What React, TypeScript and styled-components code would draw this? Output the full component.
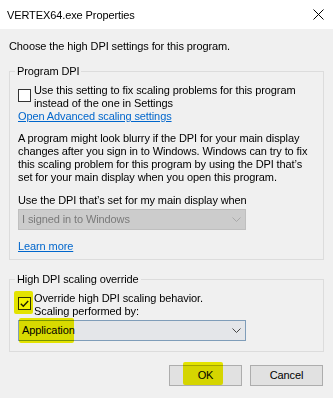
import React from "react";
import styled, { createGlobalStyle } from "styled-components";

const Global = createGlobalStyle`
  html, body { margin: 0; padding: 0; background: #f0f0f0; }
  body {
    font-family: "Liberation Sans", Arial, sans-serif;
    font-size: 11px;
    letter-spacing: -0.1px;
    color: #000;
  }
  * { box-sizing: border-box; }
`;

const Window = styled.div`
  width: 333px;
  height: 398px;
  background: #f0f0f0;
  display: flex;
  flex-direction: column;
  overflow: hidden;
`;

const TitleBar = styled.div`
  height: 29px;
  background: #fff;
  display: flex;
  align-items: center;
  justify-content: space-between;
  padding: 0 9px 0 7px;
  line-height: 14px;
`;

const Body = styled.div`
  display: flex;
  flex-direction: column;
  padding: 0 9px;
`;

const Text = styled.div<{ $mt?: number }>`
  margin-top: ${(p) => p.$mt ?? 0}px;
  line-height: 13px;
  white-space: nowrap;
`;

const Group = styled.fieldset<{ $mt: number; $pb: number }>`
  margin: ${(p) => p.$mt}px 0 0 0;
  border: 1px solid #dcdcdc;
  padding: 6px 8px ${(p) => p.$pb}px 8px;
  min-width: 0;
  display: flex;
  flex-direction: column;
  align-items: flex-start;
`;

const Legend = styled.legend`
  padding: 0 2px;
  margin-left: -3px;
  line-height: 14px;
`;

const CheckRow = styled.div`
  display: flex;
  gap: 3px;
  align-items: flex-start;
`;

const BoxWrap = styled.span`
  position: relative;
  display: inline-flex;
  margin-top: 5px;
`;

const Box = styled.span`
  width: 13px;
  height: 13px;
  border: 1px solid #333;
  background: #fff;
  display: inline-flex;
  align-items: center;
  justify-content: center;
`;

const Link = styled.a`
  color: #0066cc;
  text-decoration: underline;
  line-height: 13px;
  white-space: nowrap;
  cursor: pointer;
`;

const Combo = styled.div<{ $disabled?: boolean; $mt?: number }>`
  position: relative;
  margin-top: ${(p) => p.$mt ?? 2}px;
  width: 228px;
  height: 21px;
  display: flex;
  align-items: center;
  justify-content: space-between;
  padding: 0 4px 0 3px;
  background: ${(p) => (p.$disabled ? "#cccccc" : "#e4e6e9")};
  border: 1px solid ${(p) => (p.$disabled ? "#bfbfbf" : "#7f9db9")};
  color: ${(p) => (p.$disabled ? "#7a7a7a" : "#000")};
  line-height: 13px;
`;

const Chevron = styled.svg<{ $disabled?: boolean }>`
  width: 9px;
  height: 5px;
  stroke: ${(p) => (p.$disabled ? "#a8a8a8" : "#444")};
`;

const Highlight = styled.span<{ $l: number; $t: number; $w: number; $h: number }>`
  position: absolute;
  left: ${(p) => p.$l}px;
  top: ${(p) => p.$t}px;
  width: ${(p) => p.$w}px;
  height: ${(p) => p.$h}px;
  background: #f2f200;
  mix-blend-mode: multiply;
  border-radius: 2px;
  pointer-events: none;
`;

const Buttons = styled.div`
  display: flex;
  justify-content: flex-end;
  gap: 8px;
  margin-top: 13px;
  padding-right: 1px;
`;

const Button = styled.button`
  position: relative;
  width: 73px;
  height: 21px;
  background: #e1e1e1;
  border: 1px solid #adadad;
  font-family: inherit;
  font-size: 11px;
  letter-spacing: inherit;
  color: #000;
  padding: 0;
  line-height: 13px;
`;

const ChevronIcon = ({ disabled }: { disabled?: boolean }) => (
  <Chevron $disabled={disabled} viewBox="0 0 9 5" fill="none" strokeWidth={1}>
    <path d="M0.5 0.5 L4.5 4.5 L8.5 0.5" />
  </Chevron>
);

const Checkbox = ({ checked, highlight }: { checked?: boolean; highlight?: boolean }) => (
  <BoxWrap>
    <Box>
      {checked && (
        <svg width="9" height="8" viewBox="0 0 9 8" fill="none">
          <path d="M0.8 3.8 L3.3 6.3 L8.2 1" stroke="#222" strokeWidth={1.4} />
        </svg>
      )}
    </Box>
    {highlight && <Highlight $l={-4} $t={-6} $w={19} $h={23} />}
  </BoxWrap>
);

export default function App() {
  return (
    <Window>
      <Global />
      <TitleBar>
        <span>VERTEX64.exe Properties</span>
        <svg width="11" height="11" viewBox="0 0 11 11" fill="none">
          <path d="M0.5 0.5 L10.5 10.5 M10.5 0.5 L0.5 10.5" stroke="#000" strokeWidth={1} />
        </svg>
      </TitleBar>
      <Body>
        <Text $mt={11}>Choose the high DPI settings for this program.</Text>

        <Group $mt={11} $pb={6}>
          <Legend>Program DPI</Legend>
          <CheckRow>
            <Checkbox />
            <Text>
              Use this setting to fix scaling problems for this program
              <br />
              instead of the one in Settings
            </Text>
          </CheckRow>
          <Link>Open Advanced scaling settings</Link>
          <Text $mt={9}>
            A program might look blurry if the DPI for your main display
            <br />
            changes after you sign in to Windows. Windows can try to fix
            <br />
            this scaling problem for this program by using the DPI that’s
            <br />
            set for your main display when you open this program.
          </Text>
          <Text $mt={10}>Use the DPI that’s set for my main display when</Text>
          <Combo $disabled>
            <span>I signed in to Windows</span>
            <ChevronIcon disabled />
          </Combo>
          <Text $mt={10}>
            <Link>Learn more</Link>
          </Text>
        </Group>

        <Group $mt={12} $pb={10}>
          <Legend>High DPI scaling override</Legend>
          <CheckRow>
            <Checkbox checked highlight />
            <Text>
              Override high DPI scaling behavior.
              <br />
              Scaling performed by:
            </Text>
          </CheckRow>
          <Combo>
            <span>Application</span>
            <ChevronIcon />
            <Highlight $l={0} $t={-3} $w={55} $h={25} />
          </Combo>
        </Group>

        <Buttons>
          <Button>
            OK
            <Highlight $l={13} $t={-4} $w={40} $h={23} />
          </Button>
          <Button>Cancel</Button>
        </Buttons>
      </Body>
    </Window>
  );
}
